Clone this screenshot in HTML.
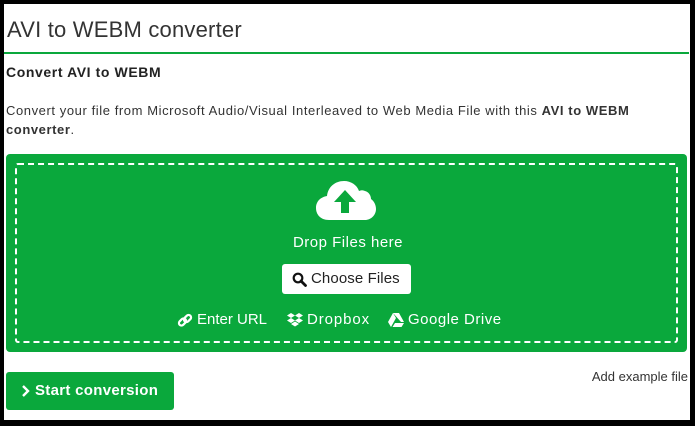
<!DOCTYPE html>
<html><head><style>
*{margin:0;padding:0;box-sizing:border-box}
html,body{width:695px;height:426px;overflow:hidden;background:#000}
body{font-family:"Liberation Sans",sans-serif;color:#333;position:relative}
.frame{position:absolute;left:4px;top:4px;width:686px;height:416px;background:#fff}
.abs{position:absolute;white-space:nowrap}
</style></head><body>
<div class="frame"></div>
<div class="abs" style="left:7px;top:17px;font-size:22px;color:#333;letter-spacing:0.2px">AVI to WEBM converter</div>
<div class="abs" style="left:4px;top:52px;width:685px;height:2px;background:#0aa83c"></div>
<div class="abs" style="left:6px;top:64px;font-size:14px;font-weight:bold;color:#222;letter-spacing:0.6px">Convert AVI to WEBM</div>
<div class="abs" style="left:6px;top:103px;font-size:13px;color:#333;letter-spacing:0.58px">Convert your file from Microsoft Audio/Visual Interleaved to Web Media File with this <b>AVI to WEBM</b></div>
<div class="abs" style="left:6px;top:122px;font-size:13px;color:#333;letter-spacing:0.58px"><b>converter</b>.</div>
<div class="abs" style="left:6px;top:154px;width:681px;height:198px;background:#0aa83c;border-radius:4px"></div>
<div class="abs" style="left:15px;top:163px;width:663px;height:180px;border:2px dashed #fff;border-radius:3px"></div>
<svg class="abs" style="left:316px;top:179px" width="60" height="42" viewBox="0 0 60 42">
<path d="M13 41 C4 41 0 35 0 29 C0 22 5 18 11 17 C12 8 19 2 28 2 C35 2 41 6 43 12 C45 11 47 11 49 12 C53 13 55 17 55 20 C58 22 60 26 60 30 C60 36 55 41 49 41 Z" fill="#fff"/>
<path d="M29 11 L40 23 L33 23 L33 34 L25 34 L25 23 L18 23 Z" fill="#0aa83c"/>
</svg>
<div class="abs" style="left:0;width:695px;text-align:center;top:234px;font-size:15px;color:#fff;padding-left:1px;letter-spacing:0.5px">Drop Files here</div>
<div class="abs" style="left:282px;top:264px;width:129px;height:30px;background:#fff;border-radius:3px"></div>
<svg class="abs" style="left:292px;top:272px" width="15" height="15" viewBox="0 0 15 15"><circle cx="6" cy="6" r="4.3" fill="none" stroke="#111" stroke-width="2.2"/><path d="M9 9 L13.5 13.5" stroke="#111" stroke-width="2.8" stroke-linecap="round"/></svg>
<div class="abs" style="left:311px;top:270px;font-size:15px;color:#222;letter-spacing:0.1px">Choose Files</div>
<svg class="abs" style="left:177px;top:313px" width="16" height="15" viewBox="0 0 16 15"><g fill="none" stroke="#fff" stroke-width="2.2"><rect x="1.5" y="6.5" width="8" height="5" rx="2.5" transform="rotate(-45 5.5 9)"/><rect x="6.5" y="3" width="8" height="5" rx="2.5" transform="rotate(-45 10.5 5.5)"/></g></svg>
<div class="abs" style="left:197px;top:311px;font-size:15px;color:#fff">Enter URL</div>
<svg class="abs" style="left:287px;top:313px" width="16" height="14" viewBox="0 0 16 14"><g fill="#fff"><path d="M4 0 L8 2.5 L4 5 L0 2.5Z"/><path d="M12 0 L16 2.5 L12 5 L8 2.5Z"/><path d="M4 5 L8 7.5 L4 10 L0 7.5Z"/><path d="M12 5 L16 7.5 L12 10 L8 7.5Z"/><path d="M4 11 L8 8.5 L12 11 L8 13.5Z"/></g></svg>
<div class="abs" style="left:307px;top:311px;font-size:15px;color:#fff;letter-spacing:0.9px">Dropbox</div>
<svg class="abs" style="left:388px;top:313px" width="16" height="14" viewBox="0 0 16 14"><g fill="#fff"><path d="M5 0 L11 0 L16 9 L13 9Z"/><path d="M5 0 L8 5 L3 14 L0 9Z"/><path d="M4.5 14 L7 10 L16 10 L13.5 14Z"/></g></svg>
<div class="abs" style="left:408px;top:311px;font-size:15px;color:#fff;letter-spacing:0.5px">Google Drive</div>
<div class="abs" style="left:6px;top:372px;width:168px;height:38px;background:#0aa83c;border-radius:3px"></div>
<svg class="abs" style="left:21px;top:384px" width="10" height="14" viewBox="0 0 10 14"><path d="M2 2 L7 7 L2 12" fill="none" stroke="#fff" stroke-width="2.4"/></svg>
<div class="abs" style="left:35px;top:382px;font-size:15px;font-weight:bold;color:#fff;letter-spacing:0.3px">Start conversion</div>
<div class="abs" style="right:7px;top:369px;font-size:13px;color:#333">Add example file</div>
</body></html>
